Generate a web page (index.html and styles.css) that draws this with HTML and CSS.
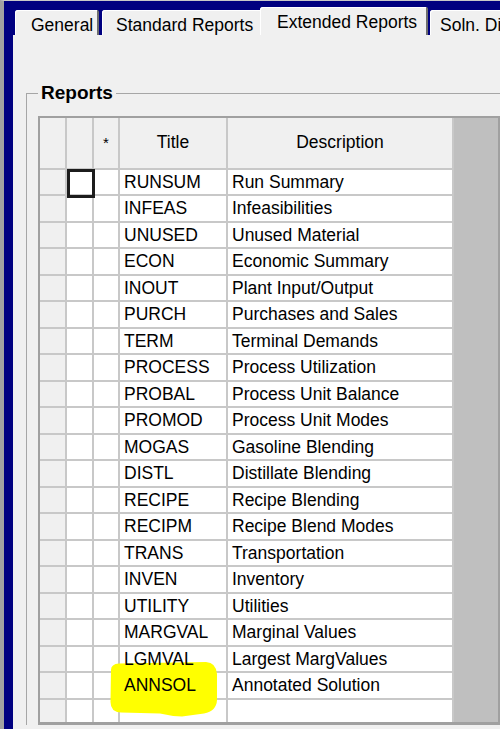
FILE: index.html
```html
<!DOCTYPE html>
<html>
<head>
<meta charset="utf-8">
<title>Extended Reports</title>
<link rel="stylesheet" href="styles.css">
</head>
<body>
<div class="window">
  <div class="tabs">
    <div class="tab tab-general">General</div>
    <div class="tab tab-standard">Standard Reports</div>
    <div class="tab tab-extended">Extended Reports</div>
    <div class="tab tab-soln">Soln. Display</div>
  </div>
  <div class="panel">
    <fieldset class="group">
      <legend>Reports</legend>
      <div class="grid">
        <div class="table">
          <div class="row head">
            <div class="cell c-rh"></div>
            <div class="cell c-chk"></div>
            <div class="cell c-star"><span class="txt">*</span></div>
            <div class="cell c-title"><span class="txt">Title</span></div>
            <div class="cell c-desc"><span class="txt">Description</span></div>
          </div>
          <div class="row"><div class="cell c-rh"></div><div class="cell c-chk focus"></div><div class="cell c-star"></div><div class="cell c-title"><span class="txt">RUNSUM</span></div><div class="cell c-desc"><span class="txt">Run Summary</span></div></div>
          <div class="row"><div class="cell c-rh"></div><div class="cell c-chk"></div><div class="cell c-star"></div><div class="cell c-title"><span class="txt">INFEAS</span></div><div class="cell c-desc"><span class="txt">Infeasibilities</span></div></div>
          <div class="row"><div class="cell c-rh"></div><div class="cell c-chk"></div><div class="cell c-star"></div><div class="cell c-title"><span class="txt">UNUSED</span></div><div class="cell c-desc"><span class="txt">Unused Material</span></div></div>
          <div class="row"><div class="cell c-rh"></div><div class="cell c-chk"></div><div class="cell c-star"></div><div class="cell c-title"><span class="txt">ECON</span></div><div class="cell c-desc"><span class="txt">Economic Summary</span></div></div>
          <div class="row"><div class="cell c-rh"></div><div class="cell c-chk"></div><div class="cell c-star"></div><div class="cell c-title"><span class="txt">INOUT</span></div><div class="cell c-desc"><span class="txt">Plant Input/Output</span></div></div>
          <div class="row"><div class="cell c-rh"></div><div class="cell c-chk"></div><div class="cell c-star"></div><div class="cell c-title"><span class="txt">PURCH</span></div><div class="cell c-desc"><span class="txt">Purchases and Sales</span></div></div>
          <div class="row"><div class="cell c-rh"></div><div class="cell c-chk"></div><div class="cell c-star"></div><div class="cell c-title"><span class="txt">TERM</span></div><div class="cell c-desc"><span class="txt">Terminal Demands</span></div></div>
          <div class="row"><div class="cell c-rh"></div><div class="cell c-chk"></div><div class="cell c-star"></div><div class="cell c-title"><span class="txt">PROCESS</span></div><div class="cell c-desc"><span class="txt">Process Utilization</span></div></div>
          <div class="row"><div class="cell c-rh"></div><div class="cell c-chk"></div><div class="cell c-star"></div><div class="cell c-title"><span class="txt">PROBAL</span></div><div class="cell c-desc"><span class="txt">Process Unit Balance</span></div></div>
          <div class="row"><div class="cell c-rh"></div><div class="cell c-chk"></div><div class="cell c-star"></div><div class="cell c-title"><span class="txt">PROMOD</span></div><div class="cell c-desc"><span class="txt">Process Unit Modes</span></div></div>
          <div class="row"><div class="cell c-rh"></div><div class="cell c-chk"></div><div class="cell c-star"></div><div class="cell c-title"><span class="txt">MOGAS</span></div><div class="cell c-desc"><span class="txt">Gasoline Blending</span></div></div>
          <div class="row"><div class="cell c-rh"></div><div class="cell c-chk"></div><div class="cell c-star"></div><div class="cell c-title"><span class="txt">DISTL</span></div><div class="cell c-desc"><span class="txt">Distillate Blending</span></div></div>
          <div class="row"><div class="cell c-rh"></div><div class="cell c-chk"></div><div class="cell c-star"></div><div class="cell c-title"><span class="txt">RECIPE</span></div><div class="cell c-desc"><span class="txt">Recipe Blending</span></div></div>
          <div class="row"><div class="cell c-rh"></div><div class="cell c-chk"></div><div class="cell c-star"></div><div class="cell c-title"><span class="txt">RECIPM</span></div><div class="cell c-desc"><span class="txt">Recipe Blend Modes</span></div></div>
          <div class="row"><div class="cell c-rh"></div><div class="cell c-chk"></div><div class="cell c-star"></div><div class="cell c-title"><span class="txt">TRANS</span></div><div class="cell c-desc"><span class="txt">Transportation</span></div></div>
          <div class="row"><div class="cell c-rh"></div><div class="cell c-chk"></div><div class="cell c-star"></div><div class="cell c-title"><span class="txt">INVEN</span></div><div class="cell c-desc"><span class="txt">Inventory</span></div></div>
          <div class="row"><div class="cell c-rh"></div><div class="cell c-chk"></div><div class="cell c-star"></div><div class="cell c-title"><span class="txt">UTILITY</span></div><div class="cell c-desc"><span class="txt">Utilities</span></div></div>
          <div class="row"><div class="cell c-rh"></div><div class="cell c-chk"></div><div class="cell c-star"></div><div class="cell c-title"><span class="txt">MARGVAL</span></div><div class="cell c-desc"><span class="txt">Marginal Values</span></div></div>
          <div class="row"><div class="cell c-rh"></div><div class="cell c-chk"></div><div class="cell c-star"></div><div class="cell c-title"><span class="txt">LGMVAL</span></div><div class="cell c-desc"><span class="txt">Largest MargValues</span></div></div>
          <div class="row"><div class="cell c-rh"></div><div class="cell c-chk"></div><div class="cell c-star"></div><div class="cell c-title"><span class="txt">ANNSOL</span></div><div class="cell c-desc"><span class="txt">Annotated Solution</span></div></div>
          <div class="row last"><div class="cell c-rh"></div><div class="cell c-chk"></div><div class="cell c-star"></div><div class="cell c-title"></div><div class="cell c-desc"></div></div>
        </div>
      </div>
    </fieldset>
  </div>
</div>
<svg class="highlight" viewBox="0 0 500 729" width="500" height="729" aria-hidden="true">
  <path d="M111 670 Q111 664 119 663.5 L206 662 Q216 662.5 217 674 L217 700 Q216.5 711 204 713.5 L182 716.5 Q170 716 160 713.5 L121 712.5 Q110.5 712 110.5 702 Z" fill="#ffff00"/>
</svg>
</body>
</html>
```

FILE: styles.css
```css
*,
*::before,
*::after {
  box-sizing: border-box;
}

html,
body {
  margin: 0;
  width: 500px;
  height: 729px;
  overflow: hidden;
}

body {
  font-family: "Liberation Sans", Arial, sans-serif;
  font-size: 17.5px;
  color: #000;
  background: #f0f0f0;
}

.window {
  height: 729px;
  display: flex;
  flex-direction: column;
  background: #000080;
  border-left: 4px solid #a2a2a2;
  border-top: 1px solid #c8c8c8;
  padding-left: 9px;
}

/* ---------- tabs ---------- */
.tabs {
  display: flex;
  align-items: flex-end;
  height: 34px;
  padding-left: 2px;
  white-space: nowrap;
  overflow: hidden;
  flex: none;
}

.tab {
  flex: none;
  height: 25px;
  padding-top: 5.5px;
  line-height: 19.5px;
  background: #f0f0f0;
  border-radius: 3px 2px 0 0;
  border-right: 2px solid #6e6e6e;
  box-shadow: inset 1px 1px 0 #ffffff;
  overflow: hidden;
}

.tab-general {
  width: 84px;
  padding-left: 16px;
  margin-right: 3px;
}

.tab-standard {
  width: 158px;
  padding-left: 14px;
  border-right: none;
  border-radius: 3px 0 0 0;
}

.tab-extended {
  width: 168px;
  height: 28px;
  padding-left: 17px;
  margin-right: 2px;
}

.tab-soln {
  width: 120px;
  padding-left: 10px;
}

/* ---------- panel ---------- */
.panel {
  flex: 1;
  background: #f0f0f0;
  padding-top: 47px;
  overflow: hidden;
}

.group {
  margin: 0 -40px 0 13px;
  padding: 0 0 0 11px;
  border: 1px solid #a6a6a6;
  border-right: none;
  border-bottom: none;
  min-width: 0;
}

.group legend {
  padding: 0 3px;
  font-weight: bold;
  font-size: 19px;
  line-height: 22px;
}

/* ---------- grid ---------- */
.grid {
  margin-top: 12px;
  width: 462px;
  display: flex;
  align-items: flex-start;
  background: #bfbfbf;
  border: 2px solid #a0a0a0;
  border-bottom-width: 3px;
}

.table {
  width: 414px;
  flex: none;
}

.row {
  display: flex;
  height: 26.5px;
}

.row.head {
  height: 51.5px;
}

.row.last {
  height: 22.5px;
}

.cell {
  flex: none;
  height: 100%;
  background: #ffffff;
  border-right: 2px solid #c8c8c8;
  border-bottom: 2px solid #c8c8c8;
  line-height: 24.5px;
  white-space: nowrap;
}

.row.last .cell {
  border-bottom: none;
}

.row.head .cell {
  background: #f0f0f0;
  line-height: 49.5px;
  text-align: center;
}

.c-rh {
  width: 27px;
}

.row .c-rh {
  background: #f0f0f0;
}

.c-chk {
  width: 27px;
}

.c-star {
  width: 26px;
}

.row.head .c-star {
  font-size: 15px;
}

.c-title {
  width: 108px;
  padding-left: 4px;
}

.c-desc {
  width: 226px;
  padding-left: 4px;
}

.row.head .c-title,
.row.head .c-desc {
  padding-left: 0;
}

.txt {
  position: relative;
  z-index: 2;
}

.focus {
  position: relative;
}

.focus::after {
  content: "";
  position: absolute;
  left: 0;
  top: -1px;
  width: 28px;
  height: 29px;
  border: 3px solid #1c1c1c;
}

/* ---------- highlighter annotation ---------- */
.highlight {
  position: absolute;
  left: 0;
  top: 0;
  z-index: 1;
  pointer-events: none;
}
```
